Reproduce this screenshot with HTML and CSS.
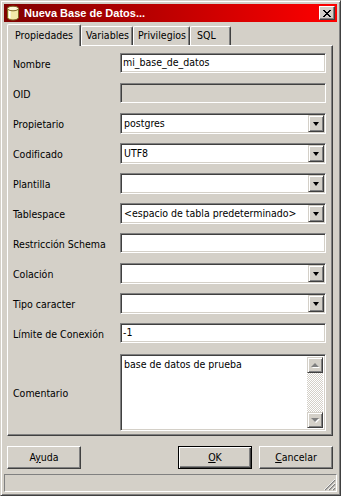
FILE: index.html
```html
<!DOCTYPE html>
<html lang="es">
<head>
    <meta charset="UTF-8">
    <title>Nueva Base de Datos...</title>
    <link rel="stylesheet" href="styles.css">
</head>
<body>
    <div class="window">
        <div class="titlebar">
            <svg class="app-icon" width="16" height="16" viewBox="0 0 16 16">
                <path d="M2.5 3.5 v9 c0 1.4 2.5 2.5 5.5 2.5 s5.5 -1.1 5.5 -2.5 v-9" fill="#f2e9a8" stroke="#7a6420"/>
                <ellipse cx="8" cy="3.5" rx="5.5" ry="2.3" fill="#fbf6d6" stroke="#7a6420"/>
                <rect x="4" y="6" width="1.5" height="7" fill="#fff"/>
            </svg>
            <span class="title">Nueva Base de Datos...</span>
            <div class="close-btn">
                <svg width="8" height="7" viewBox="0 0 8 7">
                    <path d="M0 0 L7 7 M1 0 L8 7 M7 0 L0 7 M8 0 L1 7" stroke="#000" stroke-width="1"/>
                </svg>
            </div>
        </div>

        <div class="tabs">
            <div class="tab active">Propiedades</div>
            <div class="tab">Variables</div>
            <div class="tab">Privilegios</div>
            <div class="tab">SQL</div>
        </div>

        <div class="panel">
            <div class="row">
                <label>Nombre</label>
                <div class="field text">mi_base_de_datos</div>
            </div>
            <div class="row">
                <label>OID</label>
                <div class="field text disabled"></div>
            </div>
            <div class="row">
                <label>Propietario</label>
                <div class="field combo">postgres<span class="drop"></span></div>
            </div>
            <div class="row">
                <label>Codificado</label>
                <div class="field combo">UTF8<span class="drop"></span></div>
            </div>
            <div class="row">
                <label>Plantilla</label>
                <div class="field combo"><span class="drop"></span></div>
            </div>
            <div class="row">
                <label>Tablespace</label>
                <div class="field combo">&lt;espacio de tabla predeterminado&gt;<span class="drop"></span></div>
            </div>
            <div class="row">
                <label>Restricción Schema</label>
                <div class="field text"></div>
            </div>
            <div class="row">
                <label>Colación</label>
                <div class="field combo"><span class="drop"></span></div>
            </div>
            <div class="row">
                <label>Tipo caracter</label>
                <div class="field combo"><span class="drop"></span></div>
            </div>
            <div class="row">
                <label>Límite de Conexión</label>
                <div class="field text">-1</div>
            </div>
            <div class="row memo-row">
                <label>Comentario</label>
                <div class="field memo">
                    <div class="memo-text">base de datos de prueba</div>
                    <div class="scrollbar">
                        <span class="sb-btn up"></span>
                        <span class="sb-track"></span>
                        <span class="sb-btn down"></span>
                    </div>
                </div>
            </div>
        </div>

        <div class="buttons">
            <div class="btn">A<u>y</u>uda</div>
            <div class="spacer"></div>
            <div class="btn default"><u>O</u>K</div>
            <div class="btn"><u>C</u>ancelar</div>
        </div>

        <div class="statusbar">
            <svg class="grip" width="12" height="12" viewBox="0 0 12 12">
                <path d="M11 1 L1 11 M11 5 L5 11 M11 9 L9 11" stroke="#808080" stroke-width="1.4"/>
                <path d="M11 0 L0 11 M11 4 L4 11 M11 8 L8 11" stroke="#fff" stroke-width="0.8"/>
            </svg>
        </div>
    </div>
</body>
</html>
```

FILE: styles.css
```css
body { margin: 0; background: #d4d0c8; font-family: "DejaVu Sans Condensed", "Liberation Sans", Arial, sans-serif; font-size: 10.5px; color: #000; }
.window { width: 341px; height: 496px; box-sizing: border-box; padding: 3px; background: #d4d0c8; border: 1px solid; border-color: #d4d0c8 #404040 #404040 #d4d0c8; box-shadow: inset 1px 1px #fff, inset -1px -1px #808080; display: flex; flex-direction: column; }

.titlebar { height: 18px; flex: none; display: flex; align-items: center; background: linear-gradient(to right, #800000, #ff0000); color: #fff; }
.app-icon { margin: 0 3px 0 1px; flex: none; }
.title { font-weight: bold; flex: 1; font-size: 11px; font-family: "Liberation Sans", Arial, sans-serif; }
.close-btn { width: 16px; height: 14px; box-sizing: border-box; margin-right: 2px; background: #d4d0c8; border: 1px solid; border-color: #fff #404040 #404040 #fff; box-shadow: inset -1px -1px #808080; display: flex; align-items: center; justify-content: center; }

.tabs { display: flex; align-items: flex-end; height: 21px; flex: none; margin: 2px 0 0 3px; position: relative; z-index: 1; }
.tab { height: 19px; box-sizing: border-box; padding: 0 3px 0 4px; min-width: 41px; line-height: 17px; background: #d4d0c8; border-top: 1px solid #fff; border-left: 1px solid #fff; border-right: 1px solid #404040; box-shadow: inset -1px 0 #808080; border-radius: 2px 2px 0 0; }
.tab:last-child { padding-left: 6px; }
.tab.active { height: 22px; margin-bottom: -1px; padding: 0 7px 0 7px; line-height: 20px; }

.panel { height: 391px; flex: none; box-sizing: border-box; margin: 0 4px 0 3px; padding: 7px 6px 0 5px; border: 1px solid; border-color: #fff #404040 #404040 #fff; box-shadow: inset -1px -1px #808080; display: flex; flex-direction: column; gap: 9px; }

.row { display: flex; align-items: center; height: 21px; }
.row label { width: 107px; flex: none; }
.field { flex: 1; height: 21px; box-sizing: border-box; background: #fff; border: 1px solid; border-color: #808080 #fff #fff #808080; box-shadow: inset 1px 1px #404040, inset -1px -1px #d4d0c8; padding: 0 2px 0 3px; line-height: 18px; white-space: nowrap; overflow: hidden; position: relative; }
.field.text { height: 20px; align-self: flex-start; padding-left: 2px; line-height: 17px; }
.field.disabled { background: #d4d0c8; }
.drop { position: absolute; right: 1px; top: 1px; width: 16px; height: 17px; box-sizing: border-box; background: #d4d0c8; border: 1px solid; border-color: #d4d0c8 #404040 #404040 #d4d0c8; box-shadow: inset 1px 1px #fff, inset -1px -1px #808080; }
.drop::after { content: ""; position: absolute; left: 4px; top: 6px; border-left: 3.5px solid transparent; border-right: 3.5px solid transparent; border-top: 4px solid #000; }

.memo-row { height: 77px; margin-top: 1px; }
.field.memo { height: 77px; display: flex; padding: 0; }
.memo-text { flex: 1; padding: 2px 3px; line-height: 15px; }
.scrollbar { width: 16px; margin: 2px 2px 2px 0; display: flex; flex-direction: column; }
.sb-btn { height: 16px; box-sizing: border-box; position: relative; background: #d4d0c8; border: 1px solid; border-color: #d4d0c8 #404040 #404040 #d4d0c8; box-shadow: inset 1px 1px #fff, inset -1px -1px #808080; }
.sb-track { flex: 1; background: repeating-conic-gradient(#d4d0c8 0 25%, #fff 0 50%) 0 0 / 2px 2px; }
.sb-btn::after { content: ""; position: absolute; left: 3px; top: 5px; border-left: 4px solid transparent; border-right: 4px solid transparent; filter: drop-shadow(1px 1px 0 #fff); }
.sb-btn.up::after { border-bottom: 4px solid #808080; }
.sb-btn.down::after { border-top: 4px solid #808080; }

.buttons { display: flex; flex: none; margin: 10px 4px 0 3px; gap: 7px; }
.spacer { flex: 1; }
.btn { width: 74px; height: 23px; box-sizing: border-box; text-align: center; line-height: 20px; background: #d4d0c8; border: 1px solid; border-color: #fff #404040 #404040 #fff; box-shadow: inset -1px -1px #808080; }
.btn.default { border-color: #000; box-shadow: inset 1px 1px #fff, inset -1px -1px #404040, inset -2px -2px #808080; }

.statusbar { height: 18px; flex: none; box-sizing: border-box; margin-top: 5px; border: 1px solid; border-color: #808080 #fff #fff #808080; position: relative; }
.grip { position: absolute; right: 0; bottom: 0; }
```
